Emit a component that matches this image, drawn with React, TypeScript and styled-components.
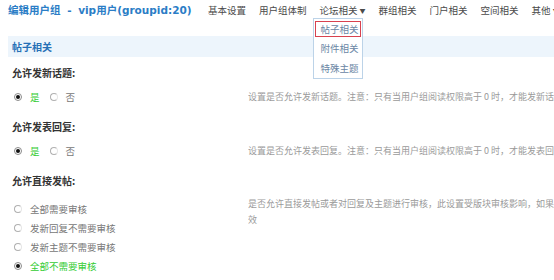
import React from 'react';
import styled, { createGlobalStyle } from 'styled-components';

const Global = createGlobalStyle`
  html, body { margin: 0; padding: 0; background: #ffffff; }
  body { font-family: "Noto Sans CJK SC", "Noto Sans", sans-serif; overflow: hidden; }
`;

const Page = styled.div`
  position: relative;
  width: 554px;
  height: 280px;
  overflow: hidden;
  padding-left: 8px;
  box-sizing: border-box;
`;

const Header = styled.div`
  display: flex;
  align-items: center;
  height: 20px;
  margin-bottom: 16px;
  white-space: nowrap;
`;

const Title = styled.div`
  flex: 0 0 200px;
  font-family: "DejaVu Sans", "Noto Sans CJK SC", sans-serif;
  font-weight: bold;
  font-size: 10.5px;
  word-spacing: 3px;
  color: #2b7dc6;
  line-height: 20px;
`;

const Nav = styled.div`
  display: flex;
  gap: 13px;
`;

const NavItem = styled.div`
  position: relative;
  font-size: 9.5px;
  line-height: 20px;
  color: #4a4a4a;
  white-space: nowrap;
`;

const Caret = styled.span`
  font-size: 6px;
  margin-left: 2px;
  vertical-align: 1px;
`;

const Menu = styled.div`
  position: absolute;
  top: 18px;
  left: -7px;
  width: 46px;
  padding: 2px 1px 2px;
  background: #fff;
  border: 1px solid #bcd3e8;
  display: flex;
  flex-direction: column;
  z-index: 2;
`;

const MenuItem = styled.div<{ $active?: boolean }>`
  height: 14px;
  line-height: 14px;
  padding-left: 5px;
  margin-bottom: 3.5px;
  font-size: 9.5px;
  color: #6a86a4;
  border: 1.5px solid ${p => (p.$active ? '#d8424f' : 'transparent')};
  &:last-child { margin-bottom: 0; }
`;

const SectionBar = styled.div`
  height: 21px;
  line-height: 21px;
  padding-left: 4px;
  background: #edf5fc;
  font-size: 10px;
  font-weight: bold;
  color: #2670b6;
`;

const SettingLabel = styled.div`
  padding: 6px 0 0 4px;
  height: 20px;
  line-height: 20px;
  font-size: 10px;
  font-weight: bold;
  color: #333;
`;

const SettingRow = styled.div`
  display: grid;
  grid-template-columns: 240px 1fr;
  min-height: 28px;
`;

const Options = styled.div<{ $vertical?: boolean }>`
  display: flex;
  flex-direction: ${p => (p.$vertical ? 'column' : 'row')};
  align-items: ${p => (p.$vertical ? 'flex-start' : 'center')};
  gap: ${p => (p.$vertical ? '0' : '10px')};
  padding-left: 6px;
  padding-top: ${p => (p.$vertical ? '8px' : '0')};
`;

const OptionItem = styled.label<{ $vertical?: boolean }>`
  display: flex;
  align-items: center;
  height: ${p => (p.$vertical ? '19px' : '28px')};
`;

const RadioMark = styled.span<{ $checked?: boolean }>`
  box-sizing: border-box;
  width: 8px;
  height: 8px;
  border-radius: 50%;
  border: 1px solid ${p => (p.$checked ? '#8a8a8a' : '#b0b0b0')};
  border-right-color: ${p => (p.$checked ? '#8a8a8a' : '#e6e6e6')};
  display: flex;
  align-items: center;
  justify-content: center;
  margin-right: 8px;
  &::after {
    content: '';
    width: 4px;
    height: 4px;
    border-radius: 50%;
    background: ${p => (p.$checked ? '#111' : 'transparent')};
  }
`;

const OptionText = styled.span<{ $checked?: boolean }>`
  font-size: 9.5px;
  color: ${p => (p.$checked ? '#33cc33' : '#777')};
`;

const Desc = styled.div<{ $top?: boolean }>`
  font-size: 9px;
  color: #9a9a9a;
  white-space: nowrap;
  overflow: hidden;
  line-height: 16px;
  align-self: ${p => (p.$top ? 'start' : 'center')};
  padding-top: ${p => (p.$top ? '5px' : '0')};
`;

type Opt = { text: string; checked?: boolean };

const Radios: React.FC<{ options: Opt[]; vertical?: boolean }> = ({ options, vertical }) => (
  <Options $vertical={vertical}>
    {options.map(o => (
      <OptionItem key={o.text} $vertical={vertical}>
        <RadioMark $checked={o.checked} />
        <OptionText $checked={o.checked}>{o.text}</OptionText>
      </OptionItem>
    ))}
  </Options>
);

const navItems = ['基本设置', '用户组体制', '论坛相关', '群组相关', '门户相关', '空间相关', '其他'];

export default function App() {
  return (
    <>
      <Global />
      <Page>
        <Header>
          <Title>编辑用户组 - vip用户(groupid:20)</Title>
          <Nav>
            {navItems.map(n => (
              <NavItem key={n}>
                {n}
                {(n === '论坛相关' || n === '其他') && <Caret>▼</Caret>}
                {n === '论坛相关' && (
                  <Menu>
                    <MenuItem $active>帖子相关</MenuItem>
                    <MenuItem>附件相关</MenuItem>
                    <MenuItem>特殊主题</MenuItem>
                  </Menu>
                )}
              </NavItem>
            ))}
          </Nav>
        </Header>

        <SectionBar>帖子相关</SectionBar>

        <SettingLabel>允许发新话题:</SettingLabel>
        <SettingRow>
          <Radios options={[{ text: '是', checked: true }, { text: '否' }]} />
          <Desc>设置是否允许发新话题。注意：只有当用户组阅读权限高于 0 时，才能发新话题</Desc>
        </SettingRow>

        <SettingLabel>允许发表回复:</SettingLabel>
        <SettingRow>
          <Radios options={[{ text: '是', checked: true }, { text: '否' }]} />
          <Desc>设置是否允许发表回复。注意：只有当用户组阅读权限高于 0 时，才能发表回复</Desc>
        </SettingRow>

        <SettingLabel>允许直接发帖:</SettingLabel>
        <SettingRow>
          <Radios
            vertical
            options={[
              { text: '全部需要审核' },
              { text: '发新回复不需要审核' },
              { text: '发新主题不需要审核' },
              { text: '全部不需要审核', checked: true },
            ]}
          />
          <Desc $top>
            是否允许直接发帖或者对回复及主题进行审核，此设置受版块审核影响，如果版块设置为需要审核，则此设置无
            <br />
            效
          </Desc>
        </SettingRow>
      </Page>
    </>
  );
}
